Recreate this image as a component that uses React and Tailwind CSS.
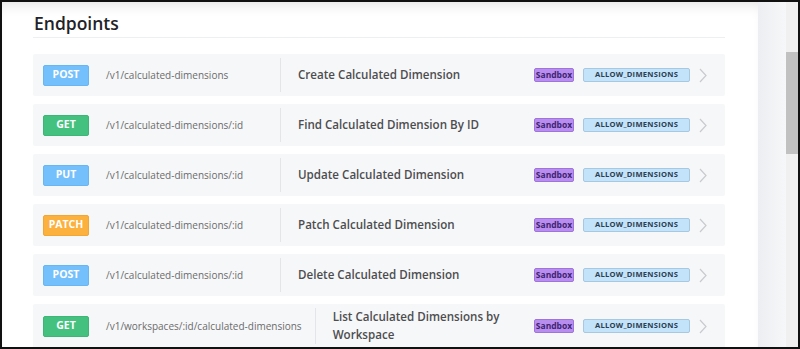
import React from "react";

const rows = [
  { method: "POST", path: "/v1/calculated-dimensions", title: "Create Calculated Dimension" },
  { method: "GET", path: "/v1/calculated-dimensions/:id", title: "Find Calculated Dimension By ID" },
  { method: "PUT", path: "/v1/calculated-dimensions/:id", title: "Update Calculated Dimension" },
  { method: "PATCH", path: "/v1/calculated-dimensions/:id", title: "Patch Calculated Dimension" },
  { method: "POST", path: "/v1/calculated-dimensions/:id", title: "Delete Calculated Dimension" },
  { method: "GET", path: "/v1/workspaces/:id/calculated-dimensions", title: "List Calculated Dimensions by Workspace" },
];

const methodClass = {
  POST: "bg-[#74c0fc] border-[#6ab6f2]",
  PUT: "bg-[#74c0fc] border-[#6ab6f2]",
  GET: "bg-[#44c17f] border-[#3db677]",
  PATCH: "bg-[#fcb03d] border-[#f2a633]",
};

function Row({ method, path, title }) {
  return (
    <div className="flex items-center bg-[#f6f7f9] rounded-[2px] pl-[10px] pr-[18px] min-h-[42px] py-[4px]">
      <div className="flex items-center shrink-0 min-w-[237px] pr-[13px] self-stretch">
        <span
          className={`w-[46px] h-[21px] flex items-center justify-center rounded-[2px] border text-white text-[10.5px] font-bold ${methodClass[method]}`}
        >
          {method}
        </span>
        <span className="ml-[17px] text-[10px] text-[#6b6b6b]">{path}</span>
      </div>
      <div className="flex-1 flex items-center border-l border-[#e3e5e8] pl-[17px] self-stretch min-h-[34px]">
        <div className="flex-1 text-[11.6px] font-semibold text-[#4d4d4f] leading-[18px] pr-[20px]">{title}</div>
        <span className="w-[40px] h-[14px] flex items-center justify-center rounded-[2px] border border-[#9f73dc] bg-[#b98df0] text-[8.5px] font-bold text-[#3e2470]">
          Sandbox
        </span>
        <span className="ml-[9px] w-[107px] h-[14px] flex items-center justify-center rounded-[2px] border border-[#a8c8e2] bg-[#c3e3fb] text-[7.6px] font-bold tracking-[0.25px] text-[#2c3e50]">
          ALLOW_DIMENSIONS
        </span>
        <svg className="ml-[9px]" width="8" height="15" viewBox="0 0 8 15" fill="none">
          <path d="M1 1l6 6.5L1 14" stroke="#c8cacf" strokeWidth="1.2" />
        </svg>
      </div>
    </div>
  );
}

export default function App() {
  return (
    <div
      className="w-[800px] h-[349px] border-2 border-[#111] overflow-hidden flex bg-white"
      style={{ fontFamily: '"Open Sans", "Noto Sans", sans-serif' }}
    >
      <div className="flex-1 bg-white shadow-[inset_0_10px_14px_-8px_rgba(0,0,0,0.12)] pl-[31px] pr-[33px] pt-[8px] overflow-hidden">
        <h1 className="text-[17.5px] font-semibold text-[#1f2328] leading-[26px] ml-[1px]">Endpoints</h1>
        <div className="h-[1px] bg-[#eeeff1] mt-[1px] mb-[16px]" />
        <div className="flex flex-col gap-[8px]">
          {rows.map((r, i) => (
            <Row key={i} {...r} />
          ))}
        </div>
      </div>
      <div className="w-[28px] bg-gradient-to-r from-[#eceef1] to-[#f6f7f9]" />
      <div className="w-[12px] bg-[#f0f0f0] pt-[50px]">
        <div className="h-[102px] bg-[#c1c1c1]" />
      </div>
    </div>
  );
}
